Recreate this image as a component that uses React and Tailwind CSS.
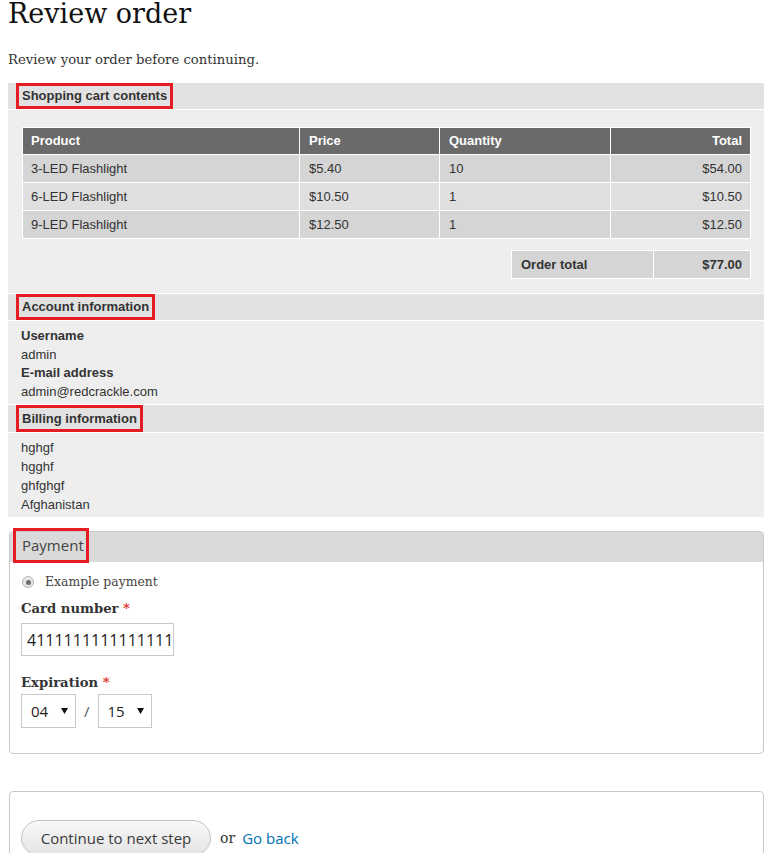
import React from "react";

const SANS = { fontFamily: '"Liberation Sans", Arial, sans-serif' };
const SERIF = { fontFamily: '"DejaVu Serif", Georgia, serif' };
const OPEN = { fontFamily: '"Open Sans", "Noto Sans", sans-serif' };

function RedBox({ children }) {
  return (
    <span className="flex h-full items-center border-[3px] border-[#e51c23] px-[3px]">
      {children}
    </span>
  );
}

function SectionHeader({ children }) {
  return (
    <div
      className="flex h-[27px] items-stretch border-b border-white bg-[#e2e2e2] pl-[8px] text-[13px] font-bold text-[#333]"
      style={SANS}
    >
      <RedBox>{children}</RedBox>
    </div>
  );
}

function Arrow() {
  return (
    <svg width="7" height="6" viewBox="0 0 7 6" className="block">
      <path d="M0 0 L7 0 L3.5 6 Z" fill="#111" />
    </svg>
  );
}

function Select({ value, w }) {
  return (
    <div
      className={`flex h-[34px] items-center border border-[#c8c8c8] bg-white pl-[9px] pr-[7px] text-[15px] text-[#222] ${w}`}
      style={OPEN}
    >
      <span className="flex-1">{value}</span>
      <Arrow />
    </div>
  );
}

export default function App() {
  const rows = [
    ["3-LED Flashlight", "$5.40", "10", "$54.00", "bg-[#d5d5d5]"],
    ["6-LED Flashlight", "$10.50", "1", "$10.50", "bg-[#dfdfdf]"],
    ["9-LED Flashlight", "$12.50", "1", "$12.50", "bg-[#d5d5d5]"],
  ];
  return (
    <div className="min-h-[853px] bg-white pl-[8px] pr-[7px] pb-[40px]" style={SERIF}>
      <h1 className="text-[27px] font-normal leading-[28px] text-[#111]">Review order</h1>
      <p className="mt-[22px] text-[13.2px] leading-[20px] text-[#333]">
        Review your order before continuing.
      </p>

      <div className="mt-[13px]">
        <SectionHeader>Shopping cart contents</SectionHeader>
        <div className="border-b border-white bg-[#eeeeee] pb-[14px] pl-[14px] pr-[13px] pt-[17px]" style={SANS}>
          <div className="grid grid-cols-[276px_139px_170px_1fr] gap-px bg-white p-px text-[13px] text-[#333]">
            <div className="flex h-[26px] items-center bg-[#6a6a6a] pl-[8px] font-bold text-white">Product</div>
            <div className="flex h-[26px] items-center bg-[#6a6a6a] pl-[9px] font-bold text-white">Price</div>
            <div className="flex h-[26px] items-center bg-[#6a6a6a] pl-[9px] font-bold text-white">Quantity</div>
            <div className="flex h-[26px] items-center justify-end bg-[#6a6a6a] pr-[8px] font-bold text-white">Total</div>
            {rows.map((r) => (
              <React.Fragment key={r[0]}>
                <div className={`flex h-[27px] items-center pl-[8px] ${r[4]}`}>{r[0]}</div>
                <div className={`flex h-[27px] items-center pl-[9px] ${r[4]}`}>{r[1]}</div>
                <div className={`flex h-[27px] items-center pl-[9px] ${r[4]}`}>{r[2]}</div>
                <div className={`flex h-[27px] items-center justify-end pr-[8px] ${r[4]}`}>{r[3]}</div>
              </React.Fragment>
            ))}
          </div>
          <div className="mt-[11px] flex justify-end">
            <div className="grid w-[240px] grid-cols-[141px_1fr] gap-px bg-white p-px text-[13px] font-bold text-[#333]">
              <div className="flex h-[27px] items-center bg-[#d5d5d5] pl-[9px]">Order total</div>
              <div className="flex h-[27px] items-center justify-end bg-[#d5d5d5] pr-[8px]">$77.00</div>
            </div>
          </div>
        </div>

        <SectionHeader>Account information</SectionHeader>
        <div className="border-b border-white bg-[#eeeeee] pb-[3px] pl-[13px] pt-[6px] text-[13px] leading-[18.5px] text-[#333]" style={SANS}>
          <div className="font-bold">Username</div>
          <div>admin</div>
          <div className="font-bold">E-mail address</div>
          <div>admin@redcrackle.com</div>
        </div>

        <div
          className="flex h-[28px] items-stretch border-b border-white bg-[#e2e2e2] pl-[8px] text-[13px] font-bold text-[#333]"
          style={SANS}
        >
          <RedBox>Billing information</RedBox>
        </div>
        <div className="bg-[#eeeeee] pb-[3px] pl-[13px] pt-[5px] text-[13px] leading-[19px] text-[#333]" style={SANS}>
          <div>hghgf</div>
          <div>hgghf</div>
          <div>ghfghgf</div>
          <div>Afghanistan</div>
        </div>
      </div>

      <div className="ml-[1px] mt-[14px] rounded-[4px] border border-[#c8c8c8] pb-[25px]">
        <div className="flex h-[30px] items-start rounded-t-[3px] bg-[#dadada]">
          <span
            className="-mt-[4px] ml-[3px] flex h-[35px] items-center border-[3px] border-[#e51c23] pl-[6px] pr-[2px] text-[15px] text-[#444]"
            style={OPEN}
          >
            Payment
          </span>
        </div>
        <div className="pl-[11px]">
          <div className="mt-[10px] flex h-[20px] items-center text-[12.4px] text-[#444]">
            <span className="ml-[1px] mr-[11px] flex h-[12px] w-[12px] items-center justify-center rounded-full border border-[#b5b5b5] bg-[#e6e6e6]">
              <span className="h-[5px] w-[5px] rounded-full bg-[#6c6c6c]" />
            </span>
            Example payment
          </div>
          <div className="mt-[7px] h-[20px] text-[13.2px] font-bold leading-[20px] text-[#333]">
            Card number <span className="text-[#e0302b]">*</span>
          </div>
          <div
            className="mt-[4px] flex h-[33px] w-[153px] items-center overflow-hidden whitespace-nowrap border border-[#c8c8c8] bg-white pl-[5px] text-[16px] text-[#222]"
            style={OPEN}
          >
            4111111111111111
          </div>
          <div className="mt-[17px] h-[20px] text-[13.2px] font-bold leading-[20px] text-[#333]">
            Expiration <span className="text-[#e0302b]">*</span>
          </div>
          <div className="mt-[1px] flex items-center">
            <Select value="04" w="w-[55px]" />
            <span className="mx-[8px] text-[15px] text-[#555]" style={OPEN}>/</span>
            <Select value="15" w="w-[54px]" />
          </div>
        </div>
      </div>

      <div className="ml-[1px] mt-[37px] rounded-[4px] border border-[#c8c8c8] pb-[20px] pl-[11px] pt-[28px]">
        <div className="flex items-center">
          <button
            className="flex h-[36px] w-[190px] items-center justify-center rounded-full border border-[#c4c4c4] bg-linear-to-b from-[#f8f8f8] to-[#e4e4e4] text-[15px] text-[#3a3a3a]"
            style={OPEN}
          >
            Continue to next step
          </button>
          <span className="ml-[9px] text-[14px] text-[#333]">or</span>
          <a className="ml-[7px] text-[15px] text-[#0071b3]" style={OPEN} href="#">
            Go back
          </a>
        </div>
      </div>
    </div>
  );
}
